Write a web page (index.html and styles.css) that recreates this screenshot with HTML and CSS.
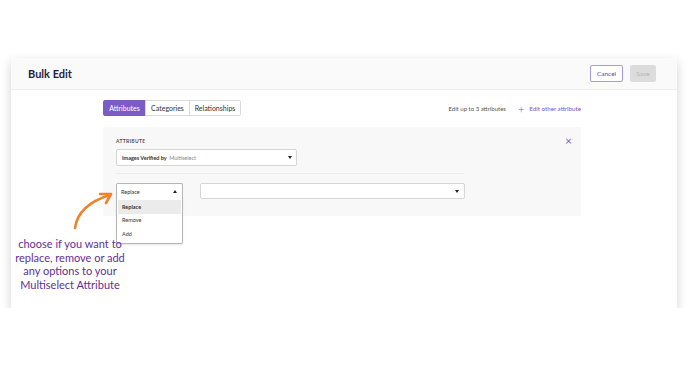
FILE: index.html
```html
<!DOCTYPE html>
<html lang="en">
  <head>
    <meta charset="UTF-8" />
    <title>Bulk Edit</title>
    <link rel="stylesheet" href="styles.css">
  </head>
  <body>
    <div class="card">
      <div class="card-header">
        <h1>Bulk Edit</h1>
        <div class="actions">
          <button class="btn btn-outline">Cancel</button>
          <button class="btn btn-disabled">Save</button>
        </div>
      </div>

      <div class="card-body">
        <div class="toolbar">
          <div class="tabs">
            <span class="tab active">Attributes</span>
            <span class="tab">Categories</span>
            <span class="tab">Relationships</span>
          </div>
          <div class="toolbar-right">
            <span class="hint">Edit up to 3 attributes</span>
            <span class="add-link"><span class="plus">+</span>Edit other attribute</span>
          </div>
        </div>

        <div class="panel">
          <div class="panel-top">
            <span class="label">ATTRIBUTE</span>
            <span class="close">&times;</span>
          </div>
          <div class="select attr-select">
            <span><b>Images Verified by</b> <span class="muted">Multiselect</span></span>
            <span class="caret"></span>
          </div>
          <div class="divider"></div>
          <div class="row">
            <div class="dropdown">
              <div class="dropdown-head">
                <span>Replace</span>
                <span class="caret up"></span>
              </div>
              <ul class="menu">
                <li class="selected">Replace</li>
                <li>Remove</li>
                <li>Add</li>
              </ul>
            </div>
            <div class="select value-select">
              <span></span>
              <span class="caret"></span>
            </div>
          </div>
        </div>
      </div>

      <!-- annotation over the screenshot -->
      <svg class="arrow" width="50" height="50" viewBox="0 0 50 50">
        <path d="M6 44 C 8 30, 18 18, 41 11" fill="none" stroke="#f0822a" stroke-width="2.6" stroke-linecap="round" />
        <path d="M31 10 L42 10 L37 19" fill="none" stroke="#f0822a" stroke-width="2.6" stroke-linecap="round" stroke-linejoin="round" />
      </svg>
      <p class="note">choose if you want to<br />replace, remove or add<br />any options to your<br />Multiselect Attribute</p>
    </div>
  </body>
</html>
```

FILE: styles.css
```css
body {
  margin: 0;
  padding: 0;
  background: #fff;
  font-family: "Lato", sans-serif;
  color: #2d2a3e;
}

.card {
  position: relative;
  margin: 58px 0 0 11px;
  width: 666px;
  height: 250px;
  background: #fff;
  box-shadow: 0 4px 10px rgba(0, 0, 0, 0.18);
}

.card-header {
  height: 31px;
  padding: 0 21px 0 17px;
  display: flex;
  align-items: center;
  justify-content: space-between;
  background: #fafafa;
  border-bottom: 1px solid #efefef;
}

.card-header h1 {
  margin: 0;
  font-size: 11px;
  font-weight: 700;
  color: #241f3d;
}

.actions {
  display: flex;
  gap: 7px;
}

.btn {
  height: 17px;
  padding: 0;
  font-family: "Lato", sans-serif;
  font-size: 6.5px;
  border-radius: 2px;
}

.btn-outline {
  width: 33px;
  background: #fff;
  border: 1px solid #a999e0;
  color: #5d4aa8;
}

.btn-disabled {
  width: 26px;
  background: #dcdcdc;
  border: 1px solid #dcdcdc;
  color: #b4b4b4;
}

.card-body {
  padding: 10px 0 0 92px;
  width: 478px;
}

.toolbar {
  display: flex;
  justify-content: space-between;
  align-items: center;
  height: 16px;
  margin-bottom: 11px;
}

.tabs {
  display: flex;
}

.tab {
  height: 16px;
  box-sizing: border-box;
  display: flex;
  align-items: center;
  justify-content: center;
  font-size: 7px;
  color: #333;
  border: 1px solid #d9d9d9;
  margin-left: -1px;
  background: #fff;
}

.tab:nth-child(1) {
  width: 43px;
  margin-left: 0;
  border-radius: 2px 0 0 2px;
}

.tab:nth-child(2) {
  width: 45px;
}

.tab:nth-child(3) {
  width: 52px;
  border-radius: 0 2px 2px 0;
}

.tab.active {
  background: #7b5cc6;
  border-color: #7b5cc6;
  color: #fff;
}

.toolbar-right {
  display: flex;
  align-items: center;
  font-size: 6px;
}

.hint {
  color: #555;
  margin-right: 12px;
}

.add-link {
  color: #6e55c4;
  font-size: 6.2px;
  display: flex;
  align-items: center;
}

.plus {
  font-size: 11px;
  font-weight: 300;
  margin-right: 5px;
  line-height: 1;
}

.panel {
  background: #f8f8f8;
  height: 89px;
  box-sizing: border-box;
  padding: 9px 9px 0 13px;
}

.panel-top {
  display: flex;
  justify-content: space-between;
  align-items: center;
  height: 9px;
  margin-bottom: 4px;
}

.label {
  font-size: 5px;
  font-weight: 700;
  letter-spacing: 0.3px;
  color: #555;
}

.close {
  font-size: 12px;
  color: #7b63cf;
  line-height: 1;
}

.select {
  height: 17px;
  box-sizing: border-box;
  background: #fff;
  border: 1px solid #d6d6d6;
  border-radius: 2px;
  display: flex;
  align-items: center;
  justify-content: space-between;
  padding: 0 4px 0 5px;
  font-size: 5.5px;
}

.attr-select {
  width: 181px;
}

.attr-select b {
  color: #333;
}

.muted {
  color: #888;
  margin-left: 1px;
}

.caret {
  width: 0;
  height: 0;
  border-left: 2.5px solid transparent;
  border-right: 2.5px solid transparent;
  border-top: 3px solid #222;
}

.caret.up {
  border-top: none;
  border-bottom: 3px solid #222;
}

.divider {
  width: 348px;
  border-top: 1px solid #ececec;
  margin: 7px 0 9px;
}

.row {
  display: flex;
  gap: 17px;
}

.dropdown {
  position: relative;
  width: 67px;
}

.dropdown-head {
  height: 16px;
  box-sizing: border-box;
  background: #fff;
  border: 1px solid #b5b5b5;
  border-bottom: none;
  border-radius: 2px 2px 0 0;
  display: flex;
  align-items: center;
  justify-content: space-between;
  padding: 0 5px 0 4px;
  font-size: 5.5px;
  color: #333;
}

.menu {
  position: absolute;
  top: 16px;
  left: 0;
  right: 0;
  margin: 0;
  padding: 1px 1px 2px;
  list-style: none;
  background: #fff;
  border: 1px solid #b5b5b5;
  border-top: none;
  border-radius: 0 0 2px 2px;
  box-shadow: 0 1px 2px rgba(0, 0, 0, 0.1);
}

.menu li {
  height: 13.5px;
  display: flex;
  align-items: center;
  padding-left: 4px;
  font-size: 5.5px;
  color: #333;
}

.menu li.selected {
  background: #ebebeb;
  font-weight: 700;
}

.value-select {
  width: 265px;
  height: 16px;
  padding-right: 5px;
}

.arrow {
  position: absolute;
  left: 58px;
  top: 126px;
}

.note {
  position: absolute;
  left: 0;
  top: 179px;
  width: 118px;
  margin: 0;
  text-align: center;
  font-size: 11px;
  line-height: 13.5px;
  color: #5f2f95;
}
```
